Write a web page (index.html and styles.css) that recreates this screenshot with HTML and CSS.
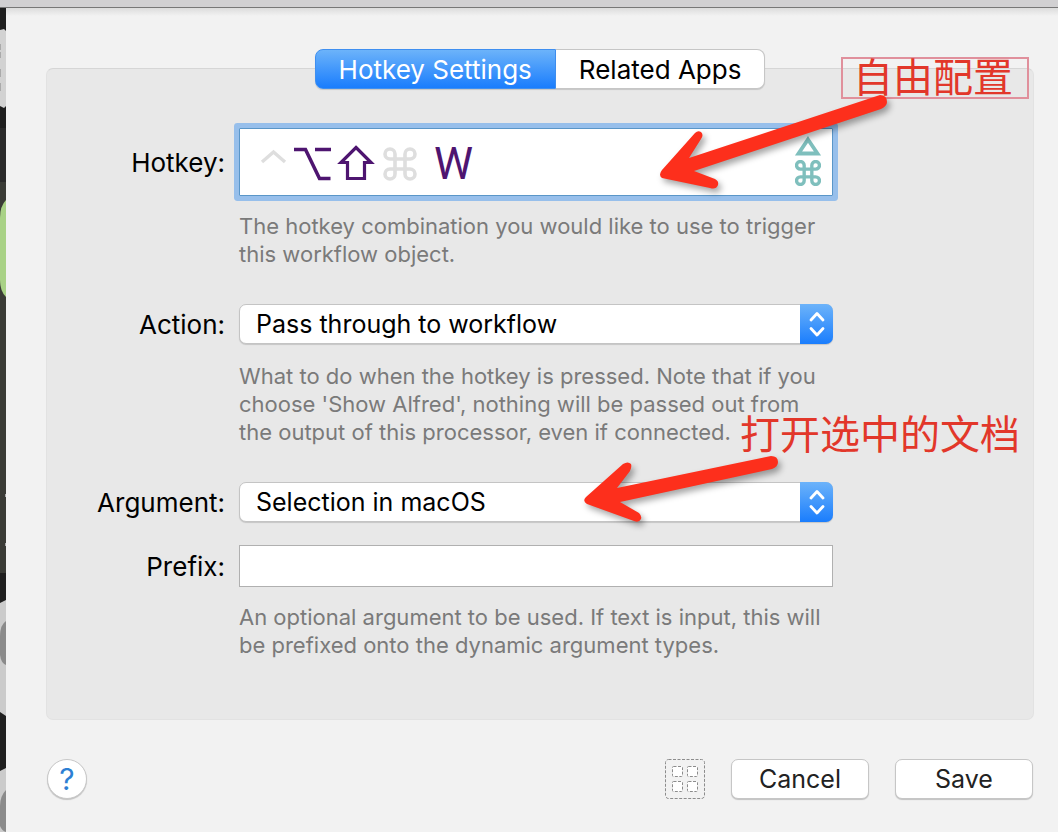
FILE: index.html
```html
<!DOCTYPE html>
<html lang="en">
<head>
    <meta charset="UTF-8">
    <meta name="viewport" content="width=device-width, initial-scale=1.0">
    <title>Hotkey Settings</title>
    <link rel="stylesheet" href="styles.css">
</head>
<body>
    <div class="titlebar"></div>
    <div class="window">
        <div class="backdrop">
            <svg width="6" height="824" viewBox="0 8 6 824" aria-hidden="true">
                <rect y="8" width="6" height="824" fill="#1f1f1f"/>
                <rect y="128" width="6" height="54" fill="#2a2a2a"/>
                <rect y="182" width="6" height="391" fill="#3a3b36"/>
                <path d="M0 30 L4 29 L6 31 V106 L4 108 L0 106Z" fill="#d2d2d2"/>
                <path d="M0 44v6M0 52v6M0 69v8M0 83v8" stroke="#aaa" stroke-width="2"/>
                <path d="M6 200 Q0 206 0 218 V280 Q0 291 6 297Z" fill="#a9d286"/>
                <path d="M5 494h1v3h-1zM5 543h1v3h-1z" fill="#aaa"/>
                <path d="M0 603 L6 600 V716 L0 712Z" fill="#cbcbcb"/>
                <path d="M6 621 Q0 625 0 636 V655 Q1 663 6 665Z" fill="#8b8b8b"/>
                <path d="M0 771 L6 768 V832 H0Z" fill="#cbcbcb"/>
                <path d="M6 790 Q0 796 0 806 V826 Q2 831 6 832Z" fill="#8b8b8b"/>
            </svg>
        </div>

        <form class="sheet">
            <svg class="symbols" aria-hidden="true">
                <symbol id="command" viewBox="0 0 34 34">
                    <path d="M12 12V7a5 5 0 1 0-5 5h20a5 5 0 1 0-5-5v20a5 5 0 1 0 5-5H7a5 5 0 1 0 5 5Z" fill="none" stroke="currentColor"/>
                </symbol>
                <symbol id="chevrons" viewBox="0 0 16 26">
                    <path d="M2 9l6-6.500 6 6.500M2 17.500l6 6.500 6-6.500" fill="none" stroke="#fff" stroke-width="2.800" stroke-linecap="round" stroke-linejoin="round"/>
                </symbol>
            </svg>

            <div class="panel">
                <div class="tabs">
                    <button type="button" class="tab active">Hotkey Settings</button>
                    <button type="button" class="tab">Related Apps</button>
                </div>

                <div class="fields">
                    <label class="label" for="hotkey">Hotkey:</label>
                    <div class="hotkey">
                        <input class="hotkey-input" id="hotkey" type="text" value="W" readonly>
                        <svg class="modifiers" width="160" height="40" viewBox="260 144 160 40" aria-hidden="true">
                            <path d="M262 162l11.500-10 11.500 10" fill="none" stroke="#dedede" stroke-width="3.400"/>
                            <path d="M294 149.500h11.500l14 29h11M315 149.500h16" fill="none" stroke="#4e1570" stroke-width="3.500"/>
                            <path d="M356 147.500l15 15h-6.500v16h-17v-16H341Z" fill="none" stroke="#4e1570" stroke-width="3.200"/>
                            <use href="#command" x="383" y="147" width="34" height="34" color="#dedede" stroke-width="3.600"/>
                        </svg>
                        <svg class="badge" width="28" height="52" viewBox="0 0 28 52" aria-hidden="true">
                            <path d="M14 4.500L23.500 18.500H4.500Z" fill="none" stroke="#7fbfbd" stroke-width="3.800"/>
                            <use href="#command" x="1" y="25" width="26" height="26" color="#7fbfbd" stroke-width="4.400"/>
                        </svg>
                        <div class="note boxed">自由配置</div>
                        <svg class="arrow arrow-hotkey" width="250" height="110" viewBox="650 90 250 110" aria-hidden="true">
                            <path d="M880 95Q887 95 887 102Q887 106 881 109L694 171L715 179Q719 181 718 185Q716 190 710 188L662 178Q658 175 662 170L695 133Q698 130 701 132Q704 135 701 139L689 158Z" fill="#fd2f1c"/>
                        </svg>
                    </div>
                    <p class="hint">The hotkey combination you would like to use to trigger this workflow object.</p>

                    <label class="label" for="action">Action:</label>
                    <div class="popup">
                        <select class="popup-select" id="action">
                            <option>Pass through to workflow</option>
                        </select>
                        <span class="popup-cap"><svg width="16" height="26"><use href="#chevrons"/></svg></span>
                    </div>
                    <p class="hint">What to do when the hotkey is pressed. Note that if you choose 'Show Alfred', nothing will be passed out from the output of this processor, even if connected.</p>

                    <label class="label" for="argument">Argument:</label>
                    <div class="popup">
                        <select class="popup-select" id="argument">
                            <option>Selection in macOS</option>
                        </select>
                        <span class="popup-cap"><svg width="16" height="26"><use href="#chevrons"/></svg></span>
                        <div class="note plain">打开选中的文档</div>
                        <svg class="arrow arrow-argument" width="210" height="80" viewBox="575 450 210 80" aria-hidden="true">
                            <path d="M771 456Q778 456 778 462Q778 467 772 469L620 502L639 513Q642 516 641 519Q639 523 634 521L587 504Q582 501 586 497L623 464Q628 461 631 464Q632 467 630 471L617 488Z" fill="#fd2f1c"/>
                        </svg>
                    </div>

                    <label class="label prefix-label" for="prefix">Prefix:</label>
                    <input class="prefix" id="prefix" type="text">
                    <p class="hint">An optional argument to be used. If text is input, this will be prefixed onto the dynamic argument types.</p>
                </div>
            </div>

            <div class="footer">
                <button type="button" class="help" aria-label="Help">?</button>
                <button type="button" class="grid-button" aria-label="Layout">
                    <svg width="40" height="40" viewBox="0 0 40 40" fill="none" stroke="#8c8c8c" stroke-dasharray="3 1.500">
                        <rect x="0.500" y="0.500" width="39" height="39" rx="3"/>
                        <g fill="#fff">
                            <rect x="7.500" y="7.500" width="10" height="10" rx="1"/>
                            <rect x="22.500" y="7.500" width="10" height="10" rx="1"/>
                            <rect x="7.500" y="22.500" width="10" height="10" rx="1"/>
                            <rect x="22.500" y="22.500" width="10" height="10" rx="1"/>
                        </g>
                    </svg>
                </button>
                <button type="button" class="button">Cancel</button>
                <button type="submit" class="button">Save</button>
            </div>
        </form>
    </div>
</body>
</html>
```

FILE: styles.css
```css
* {
    box-sizing: border-box;
}

body {
    margin: 0;
    min-height: 100vh;
    display: flex;
    flex-direction: column;
    font-family: Inter, "Noto Sans CJK SC", sans-serif;
    font-size: 25px;
    color: #000;
    background: #f2f2f2;
}

button,
input,
select {
    font: inherit;
    color: inherit;
    margin: 0;
}

.titlebar {
    height: 8px;
    background: #d1d0d2;
    border-bottom: 1px solid #777;
}

.window {
    flex: 1;
    display: flex;
}

.backdrop {
    width: 6px;
    height: 824px;
    overflow: hidden;
    background: #1f1f1f;
}

.backdrop svg {
    display: block;
}

.sheet {
    flex: 1;
    min-width: 0;
    padding: 60px 24px 30px 40px;
    background: linear-gradient(#dcdcdc, #f2f2f2 8px);
}

.symbols {
    display: none;
}

.panel {
    padding-bottom: 24px;
    background: #e8e8e8;
    border: 1px solid #e2e2e2;
    border-top-color: #d6d6d6;
    border-radius: 7px;
}

/* Tabs straddle the top edge of the panel */
.tabs {
    display: flex;
    justify-content: center;
    margin-top: -20px;
}

.tab {
    height: 40px;
    padding: 0 23px;
    border: 1px solid #c6c6c6;
    border-left: none;
    border-radius: 0 8px 8px 0;
    background: #fff;
    box-shadow: 0 1px 1px rgba(0, 0, 0, 0.15);
    font-size: 26px;
}

.tab.active {
    border: 1px solid #3f8ff0;
    border-radius: 8px 0 0 8px;
    color: #fff;
    background: linear-gradient(#6cb3fa, #1a7dfd);
}

.fields {
    display: grid;
    grid-template-columns: 178px minmax(0, 1fr);
    column-gap: 14px;
    align-items: center;
    padding: 39px 200px 0 0;
}

.label {
    text-align: right;
    font-size: 26px;
}

.hotkey,
.popup {
    position: relative;
}

.hotkey-input {
    display: block;
    width: 100%;
    height: 68px;
    padding: 4px 0 0 194px;
    border: 1px solid #5a96c8;
    background: #fff;
    box-shadow: 0 0 0 5px #97bfeb;
    border-radius: 1px;
    outline: none;
    font-family: Roboto, sans-serif;
    font-size: 44px;
    color: #4e1570;
}

.modifiers {
    position: absolute;
    left: 21px;
    top: 16px;
}

.badge {
    position: absolute;
    right: 11px;
    top: 7px;
}

.hint {
    grid-column: 2;
    margin: 16px 0 36px;
    font-size: 22px;
    line-height: 28px;
    color: #7a7a7a;
}

.popup + .hint {
    margin-top: 18px;
}

.popup-select {
    display: block;
    width: 100%;
    height: 40px;
    padding: 0 50px 0 16px;
    border: 1px solid #c4c4c4;
    border-radius: 7px;
    background: #fff;
    box-shadow: 0 1px 1px rgba(0, 0, 0, 0.15);
    appearance: none;
}

.popup-cap {
    position: absolute;
    top: 0;
    right: 0;
    width: 33px;
    height: 40px;
    display: flex;
    align-items: center;
    justify-content: center;
    border-radius: 0 7px 7px 0;
    background: linear-gradient(#6cb3fa, #1a7dfd);
    pointer-events: none;
}

.prefix {
    width: 100%;
    height: 42px;
    margin: 23px 0 0;
    padding: 0 8px;
    border: 1px solid #b0b0b0;
    background: #fff;
}

.prefix-label {
    margin-top: 23px;
}

/* Red callouts */
.note {
    position: absolute;
    z-index: 1;
    font-family: "Noto Sans CJK SC", sans-serif;
    font-size: 40px;
    line-height: 40px;
    white-space: nowrap;
    color: #e2372a;
}

.note.boxed {
    right: -196px;
    top: -71px;
    width: 188px;
    height: 42px;
    padding-left: 10px;
    border: 2px solid #e0909c;
    line-height: 32px;
}

.note.plain {
    left: 501px;
    top: -70px;
}

.arrow {
    position: absolute;
    z-index: 2;
    filter: drop-shadow(3px 4px 3px rgba(0, 0, 0, 0.35));
    pointer-events: none;
}

.arrow-hotkey {
    left: 411px;
    top: -38px;
}

.arrow-argument {
    left: 336px;
    top: -32px;
}

.footer {
    display: flex;
    align-items: center;
    padding: 39px 1px 0;
}

.help {
    width: 40px;
    height: 40px;
    margin-right: auto;
    padding: 0;
    border: 1px solid #c8c8c8;
    border-radius: 50%;
    background: #fff;
    box-shadow: 0 1px 1px rgba(0, 0, 0, 0.2);
    color: #2d7fd3;
    font-size: 30px;
}

.grid-button {
    padding: 0;
    border: none;
    background: none;
}

.grid-button svg {
    display: block;
}

.button {
    width: 138px;
    height: 40px;
    margin-left: 26px;
    padding: 0;
    border: 1px solid #c6c6c6;
    border-radius: 7px;
    background: #fff;
    box-shadow: 0 1px 1px rgba(0, 0, 0, 0.2);
    color: #222;
}
```
